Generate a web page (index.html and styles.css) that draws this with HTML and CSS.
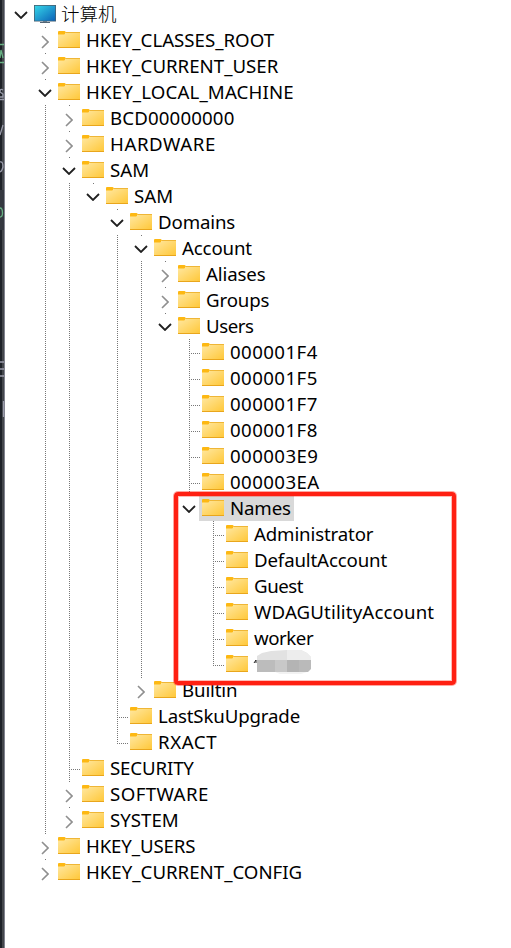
FILE: index.html
```html
<!DOCTYPE html>
<html lang="zh-CN">
<head>
<meta charset="utf-8">
<title>计算机</title>
<link rel="stylesheet" href="styles.css">
</head>
<body>
<svg class="defs" aria-hidden="true">
  <defs>
    <linearGradient id="gold" x1="0" y1="0" x2="1" y2="1"><stop offset="0" stop-color="#ffe8a2"/><stop offset="1" stop-color="#ffc83a"/></linearGradient>
    <linearGradient id="screen" x1="0" y1="0" x2="1" y2="1"><stop offset="0" stop-color="#35d5e8"/><stop offset="1" stop-color="#0b62b8"/></linearGradient>
    <symbol id="folder" viewBox="0 0 22 17"><path d="M0 4V1Q0 0 1 0H6.500Q7.500 0 8 1.500L6.500 4Z" fill="#fdb813"/><path d="M0 3.500H6.500L8.500 1.500H22V16H0Z" fill="url(#gold)"/><path d="M8 1.500H22" stroke="#efb636"/><path d="M0 16.500H22" stroke="#e9a61c"/></symbol>
    <symbol id="open" viewBox="0 0 14 8"><path d="M1 1L7 7L13 1" fill="none" stroke="#202020" stroke-width="1.8"/></symbol>
    <symbol id="shut" viewBox="0 0 8 14"><path d="M1 1L7 7L1 13" fill="none" stroke="#8f8f8f" stroke-width="1.6"/></symbol>
  </defs>
</svg>
<div class="window">
  <aside class="strip">
    <svg width="5" height="948" viewBox="0 0 5 948"><path d="M0 190H4V230H0Z" fill="#343840"/><g fill="none" stroke="#68b184" stroke-width="1.3"><path d="M0 44.5H4M0 62.5H4M0 58L1 50L3 58"/><path d="M0 208Q2.5 208 2.5 213Q2.5 217 0 217"/></g><g fill="none" stroke="#9a9cab" stroke-width="1.3"><path d="M3 90Q0 88 0 92L3 94V97H0M0 99.500H4M0 135L3 125M0 162Q3 161 3 167Q2 171 0 172M0 362H4M0 369H4M0 376H4M3.500 401V417"/></g></svg>
  </aside>
  <main class="tree">
    <div class="row root"><span class="toggle"><svg class="open"><use href="#open"/></svg></span><svg class="monitor" viewBox="0 0 22 19"><path d="M9 16H13V18H9Z" fill="#8593a0"/><path d="M6 17.500H16" stroke="#536575"/><path d="M0 0H22V16.500H0Z" fill="#486070"/><path d="M.8.8H21.200V15.700H.8Z" fill="url(#screen)"/></svg><span class="label cjk">计算机</span></div>
    <ul>
      <li><div class="row"><span class="toggle"><svg class="shut"><use href="#shut"/></svg></span><svg class="folder"><use href="#folder"/></svg><span class="label">HKEY_CLASSES_ROOT</span></div></li>
      <li><div class="row"><span class="toggle"><svg class="shut"><use href="#shut"/></svg></span><svg class="folder"><use href="#folder"/></svg><span class="label">HKEY_CURRENT_USER</span></div></li>
      <li><div class="row"><span class="toggle"><svg class="open"><use href="#open"/></svg></span><svg class="folder"><use href="#folder"/></svg><span class="label loose">HKEY_LOCAL_MACHINE</span></div>
        <ul>
          <li><div class="row"><span class="toggle"><svg class="shut"><use href="#shut"/></svg></span><svg class="folder"><use href="#folder"/></svg><span class="label loose">BCD00000000</span></div></li>
          <li><div class="row"><span class="toggle"><svg class="shut"><use href="#shut"/></svg></span><svg class="folder"><use href="#folder"/></svg><span class="label wide">HARDWARE</span></div></li>
          <li><div class="row"><span class="toggle"><svg class="open"><use href="#open"/></svg></span><svg class="folder"><use href="#folder"/></svg><span class="label">SAM</span></div>
            <ul>
              <li><div class="row"><span class="toggle"><svg class="open"><use href="#open"/></svg></span><svg class="folder"><use href="#folder"/></svg><span class="label">SAM</span></div>
                <ul>
                  <li><div class="row"><span class="toggle"><svg class="open"><use href="#open"/></svg></span><svg class="folder"><use href="#folder"/></svg><span class="label tight">Domains</span></div>
                    <ul>
                      <li><div class="row"><span class="toggle"><svg class="open"><use href="#open"/></svg></span><svg class="folder"><use href="#folder"/></svg><span class="label tight">Account</span></div>
                        <ul>
                          <li><div class="row"><span class="toggle"><svg class="shut"><use href="#shut"/></svg></span><svg class="folder"><use href="#folder"/></svg><span class="label tight">Aliases</span></div></li>
                          <li><div class="row"><span class="toggle"><svg class="shut"><use href="#shut"/></svg></span><svg class="folder"><use href="#folder"/></svg><span class="label tight">Groups</span></div></li>
                          <li><div class="row"><span class="toggle"><svg class="open"><use href="#open"/></svg></span><svg class="folder"><use href="#folder"/></svg><span class="label tighter">Users</span></div>
                            <ul>
                              <li><div class="row"><span class="leaf"></span><svg class="folder"><use href="#folder"/></svg><span class="label code">000001F4</span></div></li>
                              <li><div class="row"><span class="leaf"></span><svg class="folder"><use href="#folder"/></svg><span class="label code">000001F5</span></div></li>
                              <li><div class="row"><span class="leaf"></span><svg class="folder"><use href="#folder"/></svg><span class="label code">000001F7</span></div></li>
                              <li><div class="row"><span class="leaf"></span><svg class="folder"><use href="#folder"/></svg><span class="label code">000001F8</span></div></li>
                              <li><div class="row"><span class="leaf"></span><svg class="folder"><use href="#folder"/></svg><span class="label code">000003E9</span></div></li>
                              <li><div class="row"><span class="leaf"></span><svg class="folder"><use href="#folder"/></svg><span class="label code">000003EA</span></div></li>
                              <li><div class="row"><span class="toggle"><svg class="open"><use href="#open"/></svg></span><span class="selected"><svg class="folder"><use href="#folder"/></svg><span class="label tight">Names</span></span></div>
                                <ul>
                                  <li><div class="row"><span class="leaf"></span><svg class="folder"><use href="#folder"/></svg><span class="label tight">Administrator</span></div></li>
                                  <li><div class="row"><span class="leaf"></span><svg class="folder"><use href="#folder"/></svg><span class="label tight">DefaultAccount</span></div></li>
                                  <li><div class="row"><span class="leaf"></span><svg class="folder"><use href="#folder"/></svg><span class="label tighter">Guest</span></div></li>
                                  <li><div class="row"><span class="leaf"></span><svg class="folder"><use href="#folder"/></svg><span class="label loose">WDAGUtilityAccount</span></div></li>
                                  <li><div class="row"><span class="leaf"></span><svg class="folder"><use href="#folder"/></svg><span class="label tighter">worker</span></div></li>
                                  <li><div class="row"><span class="leaf"></span><svg class="folder"><use href="#folder"/></svg><svg class="mosaic" viewBox="0 0 59 26"><path d="M1 13L3 10V13" fill="none" stroke="#222"/><path d="M4 6L9 3L18 1L34 0H48L54 3L58 7V11H4Z" fill="#e2e2e2"/><path d="M34 0H48L54 3L58 7V11H46V10H34Z" fill="#ededed"/><path d="M4 10H22V22H4Z" fill="#bcbcbc"/><path d="M22 10H34V22H22Z" fill="#c8c8c8"/><path d="M34 10H46V22H34Z" fill="#b4b4b4"/><path d="M46 10H58V19L55 22H46Z" fill="#bababa"/><path d="M22 22H54L48 24H27Z" fill="#f2f2f2"/></svg></div></li>
                                </ul>
                              </li>
                            </ul>
                          </li>
                        </ul>
                      </li>
                      <li><div class="row"><span class="toggle"><svg class="shut"><use href="#shut"/></svg></span><svg class="folder"><use href="#folder"/></svg><span class="label tight">Builtin</span></div></li>
                    </ul>
                  </li>
                  <li><div class="row"><span class="leaf"></span><svg class="folder"><use href="#folder"/></svg><span class="label tight">LastSkuUpgrade</span></div></li>
                  <li><div class="row"><span class="leaf"></span><svg class="folder"><use href="#folder"/></svg><span class="label wide">RXACT</span></div></li>
                </ul>
              </li>
            </ul>
          </li>
          <li><div class="row"><span class="leaf"></span><svg class="folder"><use href="#folder"/></svg><span class="label tight">SECURITY</span></div></li>
          <li><div class="row"><span class="toggle"><svg class="shut"><use href="#shut"/></svg></span><svg class="folder"><use href="#folder"/></svg><span class="label code">SOFTWARE</span></div></li>
          <li><div class="row"><span class="toggle"><svg class="shut"><use href="#shut"/></svg></span><svg class="folder"><use href="#folder"/></svg><span class="label">SYSTEM</span></div></li>
        </ul>
      </li>
      <li><div class="row"><span class="toggle"><svg class="shut"><use href="#shut"/></svg></span><svg class="folder"><use href="#folder"/></svg><span class="label tight">HKEY_USERS</span></div></li>
      <li><div class="row"><span class="toggle"><svg class="shut"><use href="#shut"/></svg></span><svg class="folder"><use href="#folder"/></svg><span class="label">HKEY_CURRENT_CONFIG</span></div></li>
    </ul>
  </main>
  <div class="highlight"></div>
</div>
</body>
</html>
```
FILE: styles.css
```css
* { box-sizing: border-box; }
body { margin: 0; background: #fff; color: #000; font-family: "Noto Sans", "Noto Sans CJK SC", sans-serif; }
svg { display: block; flex: none; }
.defs { position: absolute; width: 0; height: 0; }
.window { position: relative; display: flex; height: 948px; overflow: hidden; }
.strip { width: 5px; flex: none; background: linear-gradient(90deg, #1e2228 0 2px, #44474c 2px 4px, #80828e 4px); }
.tree { flex: 1; padding: 1px 0 0 7px; }
ul { margin: 0; padding: 0 0 0 24px; list-style: none; }
/* Dotted guides: one pixel on, one pixel off, in the toggle column. */
li { background: repeating-linear-gradient(#777 0 1px, transparent 1px 2px) 9px 0 / 1px 100% no-repeat; }
li:last-child { background-size: 1px 15px; }
.row { display: flex; height: 26px; }
.toggle { width: 18px; height: 25px; margin: 1px 4px 0 0; padding-right: 1px; background: #fff; display: flex; align-items: center; justify-content: center; flex: none; }
.leaf { width: 22px; flex: none; background: repeating-linear-gradient(90deg, #777 0 1px, transparent 1px 2px) 9px 14px / 11px 1px no-repeat; }
.open { width: 14px; height: 8px; }
.shut { width: 8px; height: 14px; margin-top: 2px; }
.folder { width: 22px; height: 17px; margin-top: 4px; }
.monitor { width: 22px; height: 19px; margin-top: 4px; }
.label { margin-left: 6px; font-size: 18.67px; line-height: 26px; white-space: nowrap; }
.loose { letter-spacing: .14px; }
.code { letter-spacing: .42px; }
.wide { letter-spacing: .58px; }
.tight { letter-spacing: -.14px; }
.tighter { letter-spacing: -.45px; }
.cjk { margin-left: 5px; font-family: "Noto Sans CJK SC", sans-serif; font-weight: 300; font-size: 18.5px; line-height: 24px; }
.selected { display: flex; height: 25px; margin: 1px 0 0 -3px; padding: 0 3px; background: #d9d9d9; }
.selected .folder { margin-top: 3px; }
.selected .label { line-height: 24px; }
.mosaic { width: 59px; height: 26px; margin: -1px 0 0 5px; }
.highlight { position: absolute; left: 174px; top: 492px; width: 282px; height: 193px; border: 4px solid #ff2012; border-radius: 4px; box-shadow: 0 0 0 1px rgba(255,32,18,.4), inset 0 0 0 1px rgba(255,32,18,.3); }
```
